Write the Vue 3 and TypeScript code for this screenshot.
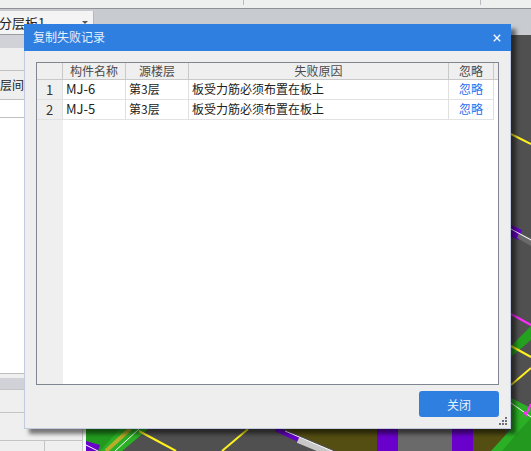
<script setup lang="ts">
const rows = [
  { id: 1, name: 'MJ-6', floor: '第3层', reason: '板受力筋必须布置在板上' },
  { id: 2, name: 'MJ-5', floor: '第3层', reason: '板受力筋必须布置在板上' },
]
</script>

<template>
  <div class="app">
    <div class="toolbar">
      <span class="tool-cut first"></span>
      <span class="tool-cut second"></span>
    </div>
    <div class="combo-band">
      <div class="combo">
        <span class="combo-text">分层板1</span>
        <i class="caret"></i>
      </div>
    </div>
    <div class="main">
      <aside class="side">
        <div class="side-panel">
          <div class="side-top"></div>
          <div class="side-gap"></div>
          <div class="side-head">层间距</div>
          <div class="side-sub"></div>
          <div class="side-white"></div>
          <div class="side-band"></div>
          <div class="side-foot">
            <div class="foot-row"></div>
            <div class="foot-row second"></div>
            <div class="foot-split"></div>
          </div>
        </div>
      </aside>
      <svg class="scene" viewBox="86 35 445 416" preserveAspectRatio="none">
        <rect x="86" y="35" width="445" height="416" fill="#505050" />
        <!-- bottom-left green slab -->
        <polygon points="86,429 148,429 122,451 86,451" fill="#239a1f" />
        <polygon points="120,429 148,429 122,451 100,451" fill="#2bb025" />
        <polygon points="86,441 100,445 98,451 86,451" fill="#6a00cc" />
        <line x1="86" y1="445" x2="98" y2="451" stroke="#ffffff" />
        <line x1="130" y1="429" x2="106" y2="451" stroke="#b6ae2a" stroke-width="4" />
        <line x1="139" y1="429" x2="115" y2="451" stroke="#ffffff" />
        <line x1="139" y1="431" x2="176" y2="451" stroke="#fff11f" stroke-width="2" />
        <line x1="248" y1="429" x2="222" y2="451" stroke="#fff11f" stroke-width="2" />
        <!-- bottom centre beams -->
        <polygon points="285,429 505,429 505,437 491,451 336,451" fill="#544e12" />
        <line x1="276" y1="429" x2="300" y2="440" stroke="#6a00cc" stroke-width="5" />
        <line x1="298" y1="440" x2="332" y2="454" stroke="#c8c8c8" stroke-width="6" />
        <line x1="285" y1="431" x2="337" y2="453" stroke="#ffffff" />
        <rect x="377" y="429" width="21" height="22" fill="#6a00cc" />
        <rect x="398" y="429" width="54" height="22" fill="#6a6a6a" />
        <rect x="452" y="429" width="21" height="22" fill="#6a00cc" />
        <!-- right-hand green slab -->
        <polygon points="511,398 531,408 531,451 491,451 511,429" fill="#2bb025" />
        <polygon points="531,418 531,451 502,451 518,432" fill="#239a1f" />
        <line x1="511" y1="403" x2="531" y2="417" stroke="#ffffff" />
        <path d="M524 412 L526 415 L531 404" fill="none" stroke="#ff2cff" stroke-width="2" />
        <line x1="511" y1="385" x2="531" y2="368" stroke="#fff11f" stroke-width="2" />
        <!-- right-hand strip -->
        <line x1="511" y1="134" x2="531" y2="144" stroke="#fff11f" stroke-width="2" />
        <polygon points="511,225 522,230 519,240 511,237" fill="#6a00cc" />
        <polygon points="519,233 531,238 531,246 517,238" fill="#6a6a6a" />
        <line x1="511" y1="229" x2="531" y2="240" stroke="#ffffff" />
        <line x1="511" y1="314" x2="531" y2="325" stroke="#ff2cff" stroke-width="2" />
        <polygon points="511,346 531,326 531,340 511,357" fill="#23a11f" />
        <line x1="511" y1="346" x2="531" y2="357" stroke="#fff11f" stroke-width="2" />
      </svg>
    </div>

    <section class="dialog">
      <header class="title">
        <span>复制失败记录</span>
        <svg class="close" viewBox="0 0 10 10"><path d="M1 1 9 9M9 1 1 9" /></svg>
      </header>
      <div class="body">
        <div class="grid">
          <div class="row head">
            <div class="cell corner"></div>
            <div class="cell c-name">构件名称</div>
            <div class="cell c-floor">源楼层</div>
            <div class="cell c-reason">失败原因</div>
            <div class="cell c-ignore">忽略</div>
          </div>
          <div v-for="r in rows" :key="r.id" class="row data">
            <div class="cell corner num">{{ r.id }}</div>
            <div class="cell c-name latin">{{ r.name }}</div>
            <div class="cell c-floor">{{ r.floor }}</div>
            <div class="cell c-reason">{{ r.reason }}</div>
            <div class="cell c-ignore link">忽略</div>
          </div>
          <div class="rest"><div class="rest-side"></div></div>
        </div>
        <div class="actions">
          <button class="btn" type="button">关闭</button>
        </div>
        <svg class="grip" viewBox="0 0 8 8">
          <rect x="6" y="0" width="2" height="2" />
          <rect x="3" y="3" width="2" height="2" />
          <rect x="6" y="3" width="2" height="2" />
          <rect x="0" y="6" width="2" height="2" />
          <rect x="3" y="6" width="2" height="2" />
          <rect x="6" y="6" width="2" height="2" />
        </svg>
      </div>
    </section>
  </div>
</template>

<style>
html, body { margin: 0; padding: 0; overflow: hidden; }
</style>

<style scoped>
.app {
  position: relative;
  width: 531px;
  height: 451px;
  overflow: hidden;
  display: flex;
  flex-direction: column;
  background: #c8cbd0;
  font-family: "Noto Sans CJK SC", "Liberation Sans", sans-serif;
  font-size: 12px;
  color: #222;
}
.toolbar {
  position: relative;
  height: 8px;
  background: #eef0ef;
  border-bottom: 1px solid #8e9296;
  flex: none;
}
.tool-cut { position: absolute; top: 0; width: 1px; height: 5px; background: #b8bcc0; }
.tool-cut.first { left: 243px; }
.tool-cut.second { left: 480px; }
.combo-band { height: 24px; padding-top: 2px; flex: none; }
.combo {
  box-sizing: border-box;
  width: 94px;
  height: 24px;
  background: #f4f4f4;
  border-right: 1px solid #b4b7bb;
  border-bottom: 1px solid #9a9da1;
  display: flex;
  align-items: center;
  justify-content: space-between;
  font-size: 13px;
}
.combo-text { margin-left: -1px; }
.caret {
  width: 0;
  height: 0;
  border-left: 3px solid transparent;
  border-right: 3px solid transparent;
  border-top: 3px solid #555;
  margin-right: 5px;
}
.main { flex: 1; display: flex; min-height: 0; }
.side {
  width: 86px;
  flex: none;
  box-sizing: border-box;
  background: #f6f6f6;
}
.side-panel {
  box-sizing: border-box;
  width: 83px;
  height: 100%;
  display: flex;
  flex-direction: column;
  border-right: 1px solid #c8c8c8;
}
.side-top { height: 13px; flex: none; background: #d0d2d8; }
.side-gap { height: 22px; flex: none; background: #efefef; border-bottom: 1px solid #c0c0c0; }
.side-head {
  height: 28px;
  flex: none;
  line-height: 28px;
  font-size: 12px;
  white-space: nowrap;
  overflow: hidden;
  background: #efefef;
  border-bottom: 1px solid #c0c0c0;
}
.side-sub { height: 17px; flex: none; background: #fff; border-bottom: 1px solid #c0c0c0; }
.side-white { height: 255px; flex: none; background: #fff; border-bottom: 1px solid #bdbdbd; }
.side-band {
  height: 11px;
  flex: none;
  background: #d0d2d8;
  border-top: 4px solid #efefef;
  border-bottom: 1px solid #c4c4c4;
}
.side-foot { flex: 1; background: #efefef; min-height: 0; }
.foot-row { height: 22px; border-bottom: 1px solid #c4c4c4; }
.foot-row.second { height: 27px; }
.foot-split { width: 44px; height: 10px; border-right: 1px solid #c4c4c4; }
.scene { flex: 1; min-width: 0; height: 100%; display: block; }

.dialog {
  position: absolute;
  left: 24px;
  top: 24px;
  width: 487px;
  height: 405px;
  box-sizing: border-box;
  display: flex;
  flex-direction: column;
  background: #eeeeef;
  border: 1px solid #c2cadf;
  border-top: none;
  box-shadow: 5px 5px 4px rgba(0, 0, 0, 0.5);
}
.title {
  height: 27px;
  box-sizing: border-box;
  flex: none;
  margin: 0 -1px;
  padding: 0 10px 2px 9px;
  display: flex;
  align-items: center;
  justify-content: space-between;
  background: #2e7fe0;
  color: #e8f1fc;
  font-size: 12px;
}
.close { width: 8px; height: 8px; fill: none; stroke: #fff; stroke-width: 1.6; margin-top: 2px; }
.body {
  position: relative;
  flex: 1;
  display: flex;
  flex-direction: column;
  min-height: 0;
  padding: 11px 11px 0;
}
.grid {
  height: 323px;
  flex: none;
  box-sizing: border-box;
  display: flex;
  flex-direction: column;
  background: #fff;
  border: 1px solid #80868f;
}
.row { display: flex; flex: none; width: 457px; }
.head { height: 16px; background: #efefef; width: 100%; border-bottom: 1px solid #c9c9c9; }
.data { height: 19px; border-bottom: 1px solid #e2e2e2; }
.cell {
  box-sizing: border-box;
  height: 100%;
  flex: none;
  border-right: 1px solid #e0e0e0;
  white-space: nowrap;
  padding-left: 3px;
  line-height: 18px;
}
.head .cell { text-align: center; padding: 0; line-height: 15px; border-right-color: #c9c9c9; color: #4a4a4a; }
.corner { width: 26px; background: #efefef; }
.num { text-align: center; padding: 0; color: #333; font-size: 13px; line-height: 20px; }
.latin { font-size: 13px; }
.c-name { width: 63px; }
.c-floor { width: 63px; }
.c-reason { width: 260px; }
.c-ignore { width: 45px; text-align: center; padding: 0; }
.link { color: #2a6ff0; }
.rest { flex: 1; }
.rest-side { width: 26px; height: 100%; background: #efefef; }
.actions { display: flex; justify-content: flex-end; margin-top: 6px; }
.btn {
  width: 80px;
  height: 26px;
  padding: 0;
  border: none;
  border-radius: 3px;
  background: #2e7fe0;
  color: #eaf2fd;
  font: 12px "Noto Sans CJK SC", "Liberation Sans", sans-serif;
}
.grip { position: absolute; right: 3px; bottom: 3px; width: 8px; height: 8px; fill: #6f7378; }
</style>
